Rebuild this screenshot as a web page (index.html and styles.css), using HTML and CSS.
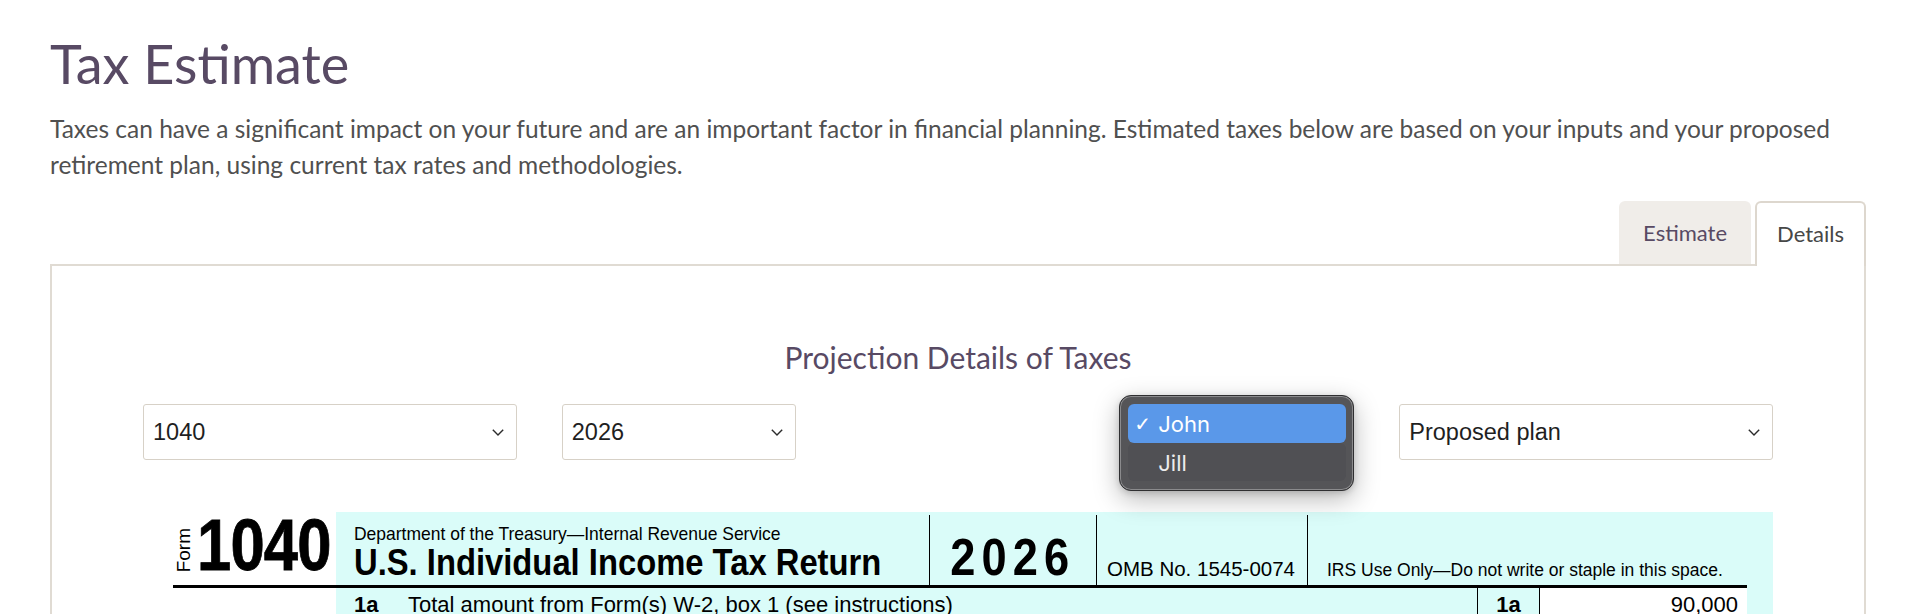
FILE: index.html
```html
<!DOCTYPE html>
<html lang="en">
<head>
<meta charset="utf-8">
<title>Tax Estimate</title>
<link rel="stylesheet" href="styles.css">
</head>
<body>
<main class="page">
  <h1 class="title">Tax Estimate</h1>
  <p class="intro">Taxes can have a significant impact on your future and are an important factor in financial planning. Estimated taxes below are based on your inputs and your proposed retirement plan, using current tax rates and methodologies.</p>

  <div class="tabs">
    <div class="tab tab-inactive">Estimate</div>
    <div class="tab tab-active">Details</div>
  </div>

  <section class="panel">
    <h2 class="panel-title">Projection Details of Taxes</h2>

    <div class="filters">
      <div class="filter-cell">
        <div class="select select-wide"><span>1040</span>
          <svg class="chev" width="12" height="7" viewBox="0 0 12 7"><polyline points="0.8,0.8 6,6 11.2,0.8" fill="none" stroke="#2b2b2b" stroke-width="1.4"/></svg>
        </div>
      </div>
      <div class="filter-cell">
        <div class="select select-narrow"><span>2026</span>
          <svg class="chev" width="12" height="7" viewBox="0 0 12 7"><polyline points="0.8,0.8 6,6 11.2,0.8" fill="none" stroke="#2b2b2b" stroke-width="1.4"/></svg>
        </div>
      </div>
      <div class="filter-cell filter-end">
        <div class="select select-narrow select-open"><span>John</span>
          <svg class="chev" width="12" height="7" viewBox="0 0 12 7"><polyline points="0.8,0.8 6,6 11.2,0.8" fill="none" stroke="#2b2b2b" stroke-width="1.4"/></svg>
        </div>
        <div class="popup">
          <div class="popup-item popup-selected"><span class="check">✓</span>John</div>
          <div class="popup-item popup-other">Jill</div>
        </div>
      </div>
      <div class="filter-cell">
        <div class="select select-wide"><span>Proposed plan</span>
          <svg class="chev" width="12" height="7" viewBox="0 0 12 7"><polyline points="0.8,0.8 6,6 11.2,0.8" fill="none" stroke="#2b2b2b" stroke-width="1.4"/></svg>
        </div>
      </div>
    </div>

    <div class="f1040">
      <div class="f-left f-head-left">
        <span class="f-form">Form</span>
        <span class="f-num">1040</span>
      </div>
      <div class="f-cyan">
        <div class="f-head">
          <div class="fh-title">
            <div class="fh-dept"><span class="cond">Department of the Treasury—Internal Revenue Service</span></div>
            <div class="fh-name"><span class="cond">U.S. Individual Income Tax Return</span></div>
          </div>
          <div class="fh-year"><span class="year-num">2026</span></div>
          <div class="fh-omb">OMB No. 1545-0074</div>
          <div class="fh-irs">IRS Use Only—Do not write or staple in this space.</div>
        </div>
      </div>
      <div class="f-left"></div>
      <div class="f-cyan">
        <div class="f-row">
          <div class="fr-label">1a</div>
          <div class="fr-text">Total amount from Form(s) W-2, box 1 (see instructions)</div>
          <div class="fr-code">1a</div>
          <div class="fr-value">90,000</div>
        </div>
      </div>
    </div>
  </section>
</main>
</body>
</html>
```

FILE: styles.css
```css
* { box-sizing: border-box; }

body {
  margin: 0;
  background: #ffffff;
  font-family: "Lato", "Inter", sans-serif;
  color: #4f4f4f;
}

.page {
  padding: 0 54px 0 50px;
}

.title {
  margin: 0;
  padding-top: 32px;
  font-size: 54px;
  line-height: 64px;
  font-weight: 400;
  color: #584a64;
}

.intro {
  margin: 15px 0 0 0;
  font-size: 24.5px;
  line-height: 36px;
  color: #505050;
}

.tabs {
  display: flex;
  justify-content: flex-end;
  align-items: flex-start;
  gap: 4px;
  margin-top: 18px;
  margin-bottom: -2px;
  position: relative;
  z-index: 2;
}

.tab {
  font-size: 22px;
  border-radius: 6px 6px 0 0;
}

.tab-inactive {
  height: 63px;
  line-height: 63px;
  padding: 0 24px;
  background: #f0ede9;
  color: #584a64;
}

.tab-active {
  height: 65px;
  line-height: 61px;
  padding: 0 20px 2px;
  background: #ffffff;
  border: 2px solid #ddd7ce;
  border-bottom: 0;
  color: #474747;
}

.panel {
  border: 2px solid #e0dbd3;
  padding: 73px 91px 40px;
  min-height: 400px;
}

.panel-title {
  margin: 0;
  text-align: center;
  font-size: 30px;
  line-height: 36px;
  font-weight: 400;
  color: #584a64;
}

.filters {
  margin-top: 29px;
  display: grid;
  grid-template-columns: repeat(4, 1fr);
  column-gap: 45px;
}

.filter-cell {
  position: relative;
  display: flex;
}

.filter-end {
  justify-content: flex-end;
}

.select {
  height: 56px;
  border: 1px solid #d7d1c7;
  border-radius: 3px;
  background: #fff;
  display: flex;
  align-items: center;
  justify-content: space-between;
  padding: 0 12px 0 9px;
  font-family: "Liberation Sans", Arial, sans-serif;
  font-size: 23.5px;
  color: #1f1f1f;
}

.select-open span { visibility: hidden; }

.select-wide { width: 100%; }
.select-narrow { width: 234px; }

.chev { display: block; }

.popup {
  position: absolute;
  right: 0;
  top: -9px;
  width: 235px;
  height: 96px;
  padding: 8px 7px 0 8px;
  border-radius: 12px;
  background: #555558;
  border: 1px solid #2f2f31;
  box-shadow: inset 0 0 0 1px rgba(255,255,255,0.32), 0 8px 26px rgba(0,0,0,0.28), 0 2px 6px rgba(0,0,0,0.15);
  font-family: "Inter", "Noto Sans", sans-serif;
  font-size: 22px;
  z-index: 5;
}

.popup-item {
  height: 39px;
  line-height: 40px;
  border-radius: 6px;
  padding-left: 30px;
  position: relative;
}

.popup-selected {
  background: #5a98e9;
  color: #ffffff;
}

.popup-other {
  color: #ececec;
  background: #505054;
  height: 38px;
}

.check {
  position: absolute;
  left: 6px;
  top: 0;
  font-family: "DejaVu Sans", sans-serif;
  font-size: 20px;
  font-weight: 700;
}

/* Form 1040 */
.f1040 {
  margin-top: 52px;
  margin-left: 30px;
  display: grid;
  grid-template-columns: 163px 1fr;
  font-family: "Liberation Sans", Arial, sans-serif;
  color: #000;
}

.f-left {
  background: #fff;
}

.f-head-left {
  border-bottom: 3px solid #000;
  display: flex;
  align-items: flex-end;
  padding-bottom: 11px;
  padding-left: 3px;
  gap: 6px;
}

.f-form {
  writing-mode: vertical-rl;
  transform: rotate(180deg);
  font-size: 19px;
  line-height: 15px;
  width: 15px;
  margin-bottom: 2px;
}

.f-num {
  display: inline-block;
  width: 134px;
  font-size: 72px;
  line-height: 58px;
  font-weight: 700;
  letter-spacing: -1px;
  transform: scaleX(0.855);
  transform-origin: left bottom;
  white-space: nowrap;
  -webkit-text-stroke: 0.8px #000;
}

.f-cyan {
  background: #dafcf9;
  padding-right: 26px;
}

.f-head {
  height: 76px;
  padding-top: 3px;
  border-bottom: 3px solid #000;
  display: flex;
}

.fh-title {
  width: 593px;
  padding: 0 0 5px 18px;
  display: flex;
  flex-direction: column;
  justify-content: flex-end;
}

.cond {
  display: inline-block;
  white-space: nowrap;
  transform-origin: left bottom;
}

.fh-dept {
  font-size: 19px;
  line-height: 24px;
}

.fh-dept .cond { transform: scaleX(0.92); }

.fh-name {
  font-size: 36px;
  line-height: 34px;
  font-weight: 700;
}

.fh-name .cond { transform: scaleX(0.91); }

.fh-year {
  width: 167px;
  border-left: 1px solid #000;
  display: flex;
  align-items: flex-end;
  justify-content: center;
  padding: 0 0 3px 0;
}

.year-num {
  display: inline-block;
  font-size: 52px;
  line-height: 50px;
  font-weight: 700;
  letter-spacing: 7px;
  transform: scaleX(0.87);
  transform-origin: center bottom;
}

.fh-omb {
  width: 211px;
  border-left: 1px solid #000;
  display: flex;
  align-items: flex-end;
  padding: 0 0 5px 10px;
  font-size: 20.5px;
  line-height: 22px;
}

.fh-irs {
  flex: 1;
  border-left: 1px solid #000;
  display: flex;
  align-items: flex-end;
  padding: 0 0 5px 19px;
  font-size: 17.5px;
  line-height: 20px;
}

.f-row {
  display: flex;
  height: 40px;
  font-size: 22px;
  line-height: 34px;
}

.fr-label {
  width: 72px;
  padding-left: 18px;
  font-weight: 700;
}

.fr-text {
  flex: 1;
}

.fr-code {
  width: 62px;
  border-left: 1px solid #000;
  text-align: center;
  font-weight: 700;
}

.fr-value {
  width: 208px;
  border-left: 1px solid #000;
  background: #fff;
  text-align: right;
  padding: 0 9px 0 0;
}
```
